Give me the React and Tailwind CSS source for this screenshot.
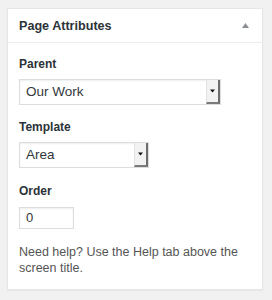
export default function App() {
  const font = { fontFamily: '"Liberation Sans", Arial, sans-serif' };
  const Caret = () => (
    <div className="h-full w-[14px] bg-[#f2f2f2] border-l border-[#e2e2e2] border-r-2 border-b-2 border-r-[#6e6e6e] border-b-[#7a7a7a] flex items-center justify-center">
      <svg width="5" height="4" viewBox="0 0 5 4">
        <path d="M0 0.5 L5 0.5 L2.5 3.5 Z" fill="#111" />
      </svg>
    </div>
  );
  return (
    <div className="w-[272px] h-[300px] bg-[#f1f1f1] pt-[8px] pl-[7px]" style={font}>
      <div className="w-[256px] h-[282px] bg-white border border-[#e5e5e5] shadow-[0_1px_1px_rgba(0,0,0,0.04)] flex flex-col">
        <div className="h-[34px] shrink-0 border-b border-[#eeeeee] flex items-center justify-between pl-[11px] pr-[13px]">
          <span className="text-[12.6px] leading-[16px] font-semibold text-[#2c3338]">Page Attributes</span>
          <svg width="7" height="5" viewBox="0 0 7 5">
            <path d="M0 5 L3.5 0 L7 5 Z" fill="#8c8f94" />
          </svg>
        </div>
        <div className="pl-[11px] pt-[13px] flex flex-col items-start">
          <div className="text-[12px] leading-[16px] font-semibold text-[#2c3338]">Parent</div>
          <div className="mt-[7px] w-[202px] h-[26px] border border-[#dddddd] shadow-[inset_0_1px_2px_rgba(0,0,0,0.07)] bg-white flex items-center justify-between">
            <span className="pl-[6px] text-[13.5px] leading-[16px] text-[#32373c]">Our Work</span>
            <Caret />
          </div>
          <div className="mt-[14px] text-[12px] leading-[16px] font-semibold text-[#2c3338]">Template</div>
          <div className="mt-[7px] w-[130px] h-[26px] border border-[#dddddd] shadow-[inset_0_1px_2px_rgba(0,0,0,0.07)] bg-white flex items-center justify-between">
            <span className="pl-[6px] text-[13.5px] leading-[16px] text-[#32373c]">Area</span>
            <Caret />
          </div>
          <div className="mt-[15px] text-[12px] leading-[16px] font-semibold text-[#2c3338]">Order</div>
          <div className="mt-[8px] w-[55px] h-[22px] border border-[#dddddd] shadow-[inset_0_1px_2px_rgba(0,0,0,0.07)] bg-white flex items-center">
            <span className="pl-[6px] text-[13px] leading-[16px] text-[#32373c]">0</span>
          </div>
          <p className="mt-[15px] w-[230px] text-[12.5px] leading-[16px] text-[#555555]">
            Need help? Use the Help tab above the screen title.
          </p>
        </div>
      </div>
    </div>
  );
}
